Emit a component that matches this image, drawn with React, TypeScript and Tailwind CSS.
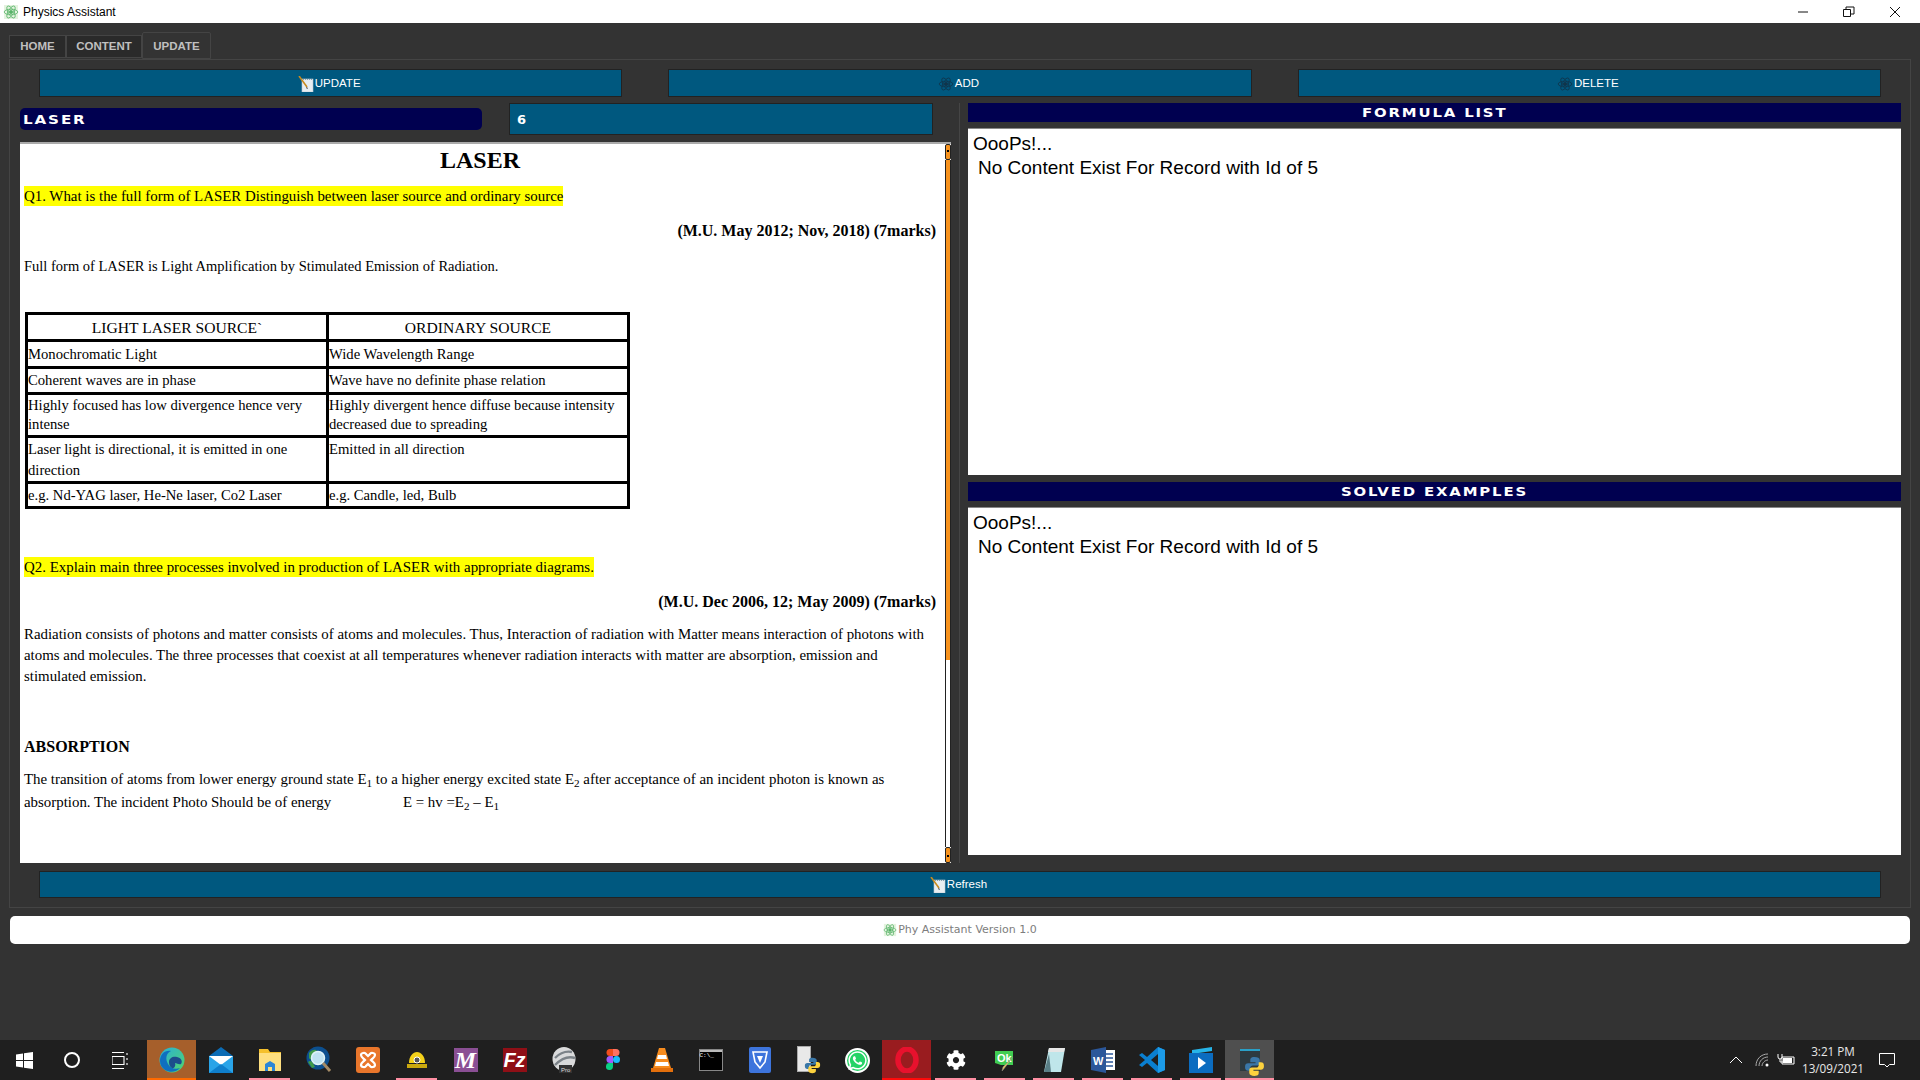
import React from "react";
import { FaCog, FaWhatsapp } from "react-icons/fa";

const serif = "font-['Liberation_Serif',serif]";
const techno = "font-['DejaVu_Sans',sans-serif] font-bold";

const AtomIcon = ({ dark = false, size = 16 }: { dark?: boolean; size?: number }) => {
  const c = dark ? "#10344a" : "#58b368";
  return (
    <svg width={size} height={size} viewBox="0 0 16 16" fill="none" stroke={c} strokeWidth="0.8">
      {!dark && <rect x="1" y="1" width="14" height="14" fill="#e4f3df" stroke="none" />}
      <ellipse cx="8" cy="8" rx="6.8" ry="2.8" />
      <ellipse cx="8" cy="8" rx="6.8" ry="2.8" transform="rotate(60 8 8)" />
      <ellipse cx="8" cy="8" rx="6.8" ry="2.8" transform="rotate(120 8 8)" />
      <circle cx="8" cy="8" r="1.6" fill={c} />
    </svg>
  );
};

const NoteIcon = () => (
  <svg width="16" height="16" viewBox="0 0 16 16">
    <rect x="4" y="3" width="11" height="13" fill="#e8eef2" stroke="#b9c7d0" strokeWidth="0.6" />
    <path d="M5 3.500h9" stroke="#8aa0ad" strokeWidth="1" strokeDasharray="1 1" />
    <path d="M1 0l8 11" stroke="#c88b1f" strokeWidth="1.6" />
    <path d="M9 11l1 2-2-1z" fill="#222" />
  </svg>
);

const Edge = () => (
  <svg width="26" height="26" viewBox="0 0 26 26">
    <defs>
      <linearGradient id="edgeA" x1="0" y1="0" x2="1" y2="1">
        <stop offset="0" stopColor="#29b0d8" />
        <stop offset="1" stopColor="#52d46c" />
      </linearGradient>
    </defs>
    <circle cx="13" cy="13" r="12.5" fill="url(#edgeA)" />
    <path d="M1 14C1 7 6 3 12 4c-5 2-6 8-3 13 2 4 7 6 12 4-3 4-10 5-15 2C3 21 1 18 1 14z" fill="#0f6fc0" />
    <path d="M10 15c0-4 4-6 8-5 4 1 6 4 4 7-2 1-4-1-6-1 1 3-1 6-3 5-2-1-3-3-3-6z" fill="#1c4d8c" />
  </svg>
);

const Mail = () => (
  <svg width="26" height="28" viewBox="0 0 26 28">
    <path d="M1 10L13 1l12 9v17H1z" fill="#0b6cb5" />
    <path d="M1 10h24v17H1z" fill="#29a4e8" />
    <path d="M1 10l12 9 12-9" fill="#ffffff" />
    <path d="M1 27l12-9 12 9z" fill="#0f7fcc" />
  </svg>
);

const Folder = () => (
  <svg width="24" height="24" viewBox="0 0 24 24">
    <path d="M1 1h9l2 3h11v19H1z" fill="#f5c02c" />
    <path d="M1 5h22v18H1z" fill="#ffdf7f" />
    <path d="M7 23v-7l5-3 5 3v7h-3v-4h-4v4z" fill="#2f86d6" />
  </svg>
);

const Search = () => (
  <svg width="26" height="28" viewBox="0 0 26 28">
    <circle cx="12" cy="12" r="11.5" fill="#0c4f8f" />
    <path d="M3 7c3-4 7-4 8-2s-3 3-4 6-3 3-4 1z" fill="#3f9a4a" />
    <circle cx="12" cy="12" r="6.500" fill="#bfe3f2" stroke="#dff3f8" strokeWidth="1.500" />
    <path d="M2 16c3-3 5 1 7 5l-3 1z" fill="#3f9a4a" />
    <path d="M17 17l7 8" stroke="#a58b66" strokeWidth="3" />
  </svg>
);

const Xampp = () => (
  <svg width="24" height="26" viewBox="0 0 24 26">
    <rect width="24" height="26" rx="3" fill="#e9762b" />
    <path d="M5 8c0-2 4-3 5-1l2 2 2-2c1-2 5-1 5 1 0 2-2 3-4 5 2 2 4 3 4 5 0 2-4 3-5 1l-2-2-2 2c-1 2-5 1-5-1 0-2 2-3 4-5-2-2-4-3-4-5z" fill="none" stroke="#fff" strokeWidth="2.2" />
  </svg>
);

const Helmet = () => (
  <svg width="20" height="20" viewBox="0 0 20 20">
    <path d="M2 13C2 6 6 2 10 2s8 4 8 11z" fill="#f4d11a" />
    <path d="M0 14h20v4H0z" fill="#caa80e" />
    <circle cx="10" cy="10" r="3" fill="#555" stroke="#fff" />
  </svg>
);

const SquareText = ({ bg, text, cls }: { bg: string; text: string; cls: string }) => (
  <div className={`flex h-[24px] w-[24px] items-center justify-center ${cls}`} style={{ backgroundColor: bg }}>
    {text}
  </div>
);

const Earth = () => (
  <svg width="24" height="26" viewBox="0 0 24 26">
    <ellipse cx="12" cy="12" rx="11.5" ry="12" fill="#d9dadb" />
    <path d="M3 11c6-6 12-7 17-6M3 18c7-7 14-9 20-7" stroke="#7b8288" strokeWidth="2.4" fill="none" />
    <rect x="7" y="18" width="13" height="8" fill="#333" />
    <text x="9" y="25" fontSize="6" fill="#ddd" fontFamily="Liberation Sans">Pro</text>
  </svg>
);

const Figma = () => (
  <svg width="14" height="22" viewBox="0 0 14 22">
    <path d="M7 0H4a3.5 3.5 0 000 7h3z" fill="#f24e1e" />
    <path d="M7 0h3a3.5 3.5 0 010 7H7z" fill="#ff7262" />
    <path d="M7 7H4a3.5 3.5 0 000 7h3z" fill="#a259ff" />
    <circle cx="10.5" cy="10.5" r="3.5" fill="#1abcfe" />
    <path d="M7 14H4a3.5 3.5 0 103 3.5z" fill="#0acf83" />
  </svg>
);

const Vlc = () => (
  <svg width="22" height="26" viewBox="0 0 22 26">
    <path d="M8 1h6l6 20H2z" fill="#f78c1e" />
    <path d="M7 8h8l1 4H6zM5 15h12l1 4H4z" fill="#fff" />
    <path d="M0 21h22v4H0z" fill="#e36f0c" />
  </svg>
);

const Cmd = () => (
  <div className="flex h-[22px] w-[24px] flex-col border border-[#888] bg-black">
    <div className="h-[2px] bg-[#bbb]" />
    <span className="font-['Liberation_Mono',monospace] text-[6px] leading-[8px] text-white">C:\_</span>
  </div>
);

const Shield = () => (
  <svg width="22" height="26" viewBox="0 0 22 26">
    <rect width="22" height="26" rx="2" fill="#3d74dc" />
    <path d="M4 5h14l-2 10-5 6-5-6z" fill="none" stroke="#fff" strokeWidth="1.6" />
    <path d="M8 9h6l-3 7z" fill="#fff" />
  </svg>
);

const Python = ({ size = 20 }: { size?: number }) => (
  <svg width={size} height={size} viewBox="0 0 20 20">
    <path d="M10 1C6 1 6 3 6 4v2h5v1H4C2 7 1 8 1 10.5S2 14 4 14h2v-2.500c0-1.500 1-2.500 2.500-2.500h4C14 9 15 8 15 6.500V4c0-2-2-3-5-3z" fill="#3a77a8" />
    <path d="M10 19c4 0 4-2 4-3v-2H9v-1h7c2 0 3-1 3-3.500S18 6 16 6h-2v2.500c0 1.500-1 2.500-2.500 2.500h-4C6 11 5 12 5 13.500V16c0 2 2 3 5 3z" fill="#fdd23e" />
  </svg>
);

const PyFile = () => (
  <div className="relative h-[28px] w-[24px]">
    <div className="h-[26px] w-[14px] border border-[#aaa] bg-[#e9e9e9]" />
    <div className="absolute bottom-0 right-0">
      <Python size={17} />
    </div>
  </div>
);

const Opera = () => (
  <svg width="24" height="26" viewBox="0 0 24 26">
    <ellipse cx="12" cy="13" rx="9" ry="11" fill="none" stroke="#e8112d" strokeWidth="5.500" />
  </svg>
);

const QtIcon = () => (
  <svg width="24" height="24" viewBox="0 0 24 24">
    <path d="M2 3h18v14H8l-6-2z" fill="#41cd52" />
    <text x="4" y="14" fontSize="11" fontWeight="700" fill="#fff" fontFamily="Liberation Sans">Ok</text>
    <path d="M20 9L10 22l-1 1 1-4z" fill="#e8c75e" stroke="#888" strokeWidth="0.5" />
  </svg>
);

const Notes = () => (
  <svg width="24" height="26" viewBox="0 0 24 26">
    <path d="M7 1h16l-4 24H2z" fill="#bfe6ea" />
    <path d="M7 1h16l-1 4H6z" fill="#e6e6e6" />
    <path d="M2 25l5-18 2 18z" fill="#5a7f86" />
  </svg>
);

const Word = () => (
  <svg width="24" height="26" viewBox="0 0 24 26">
    <rect x="10" y="3" width="14" height="20" fill="#fff" />
    <path d="M14 7h8M14 11h8M14 15h8M14 19h8" stroke="#2b579a" strokeWidth="1.600" />
    <path d="M0 3l15-3v26L0 23z" fill="#2b579a" />
    <text x="2" y="18" fontSize="11" fontWeight="700" fill="#fff" fontFamily="Liberation Sans">W</text>
  </svg>
);

const VsCode = () => (
  <svg width="26" height="26" viewBox="0 0 26 26">
    <path d="M19 0l7 3v20l-7 3-11-10-5 4-3-2 6-5-6-5 3-2 5 4z" fill="#0a7fd0" />
    <path d="M19 7l-7 6 7 6z" fill="#1f1f1f" />
    <path d="M19 0l7 3v20l-7 3z" fill="#1c9be8" />
  </svg>
);

const Player = () => (
  <svg width="24" height="26" viewBox="0 0 24 26">
    <path d="M3 3l20-3v4L3 7z" fill="#27b4e8" />
    <rect y="6" width="24" height="20" fill="#0b6cc0" />
    <path d="M9 10l8 6-8 6z" fill="#fff" />
  </svg>
);

const PyApp = () => (
  <div className="relative h-[22px] w-[20px] border-t-2 border-[#2aa0c8] bg-[#2d3a40]">
    <div className="absolute -bottom-[6px] -right-[5px]">
      <Python size={21} />
    </div>
  </div>
);

const WhatsApp = () => (
  <div className="flex h-[25px] w-[25px] items-center justify-center rounded-full border-[2px] border-white bg-[#25d366]">
    <FaWhatsapp size={21} color="#fff" />
  </div>
);

const Windows = () => (
  <svg width="17" height="17" viewBox="0 0 17 17" fill="#fff">
    <path d="M0 2.500l7-1v6.500H0zM8 1.300L17 0v8H8zM0 9h7v6.500l-7-1zM8 9h9v8l-9-1.300z" />
  </svg>
);

const TaskView = () => (
  <svg width="17" height="17" viewBox="0 0 17 17" fill="none" stroke="#fff" strokeWidth="1.100">
    <path d="M0 .5h12M0 16.500h12M0 4.500h12v8H0zM15 1v2M15 6v2M15 11v2" />
  </svg>
);

const taskbarItems: { icon: React.ReactNode; mark?: string; bg?: string }[] = [
  { icon: <Edge />, bg: "bg-[#a65f2b]", mark: "bg-[#ff6a00]" },
  { icon: <Mail /> },
  { icon: <Folder />, mark: "bg-[#ff8fa3]" },
  { icon: <Search /> },
  { icon: <Xampp /> },
  { icon: <Helmet />, mark: "bg-[#ff8fa3]" },
  { icon: <SquareText bg="#8a4f94" text="M" cls="font-['Liberation_Serif',serif] text-[24px] font-bold italic text-white" /> },
  { icon: <SquareText bg="#8f0f16" text="Fz" cls="font-['Liberation_Sans',sans-serif] text-[20px] font-bold italic text-white" /> },
  { icon: <Earth /> },
  { icon: <Figma /> },
  { icon: <Vlc /> },
  { icon: <Cmd /> },
  { icon: <Shield /> },
  { icon: <PyFile /> },
  { icon: <WhatsApp /> },
  { icon: <Opera />, bg: "bg-[#991c1f]", mark: "bg-[#ff0a0a]" },
  { icon: <FaCog size={20} color="#fff" />, mark: "bg-[#ff8fa3]" },
  { icon: <QtIcon />, mark: "bg-[#ff8fa3]" },
  { icon: <Notes />, mark: "bg-[#ff8fa3]" },
  { icon: <Word />, mark: "bg-[#ff8fa3]" },
  { icon: <VsCode />, mark: "bg-[#ff8fa3]" },
  { icon: <Player />, mark: "bg-[#ff8fa3]" },
  { icon: <PyApp />, bg: "bg-[#4f4f4f]", mark: "bg-[#ff8fa3]" },
];

const ActionButton = ({ label, icon, className = "" }: { label: string; icon: React.ReactNode; className?: string }) => (
  <div className={`flex items-center justify-center gap-[1px] border border-[#222] bg-[#00587f] pr-[3px] pt-[1px] font-['Liberation_Sans',sans-serif] text-[11.5px] text-white ${className}`}>
    {icon}
    <span>{label}</span>
  </div>
);

const TableRow = ({ cells, h, center }: { cells: string[]; h: string; center?: boolean }) => (
  <tr className={h}>
    {cells.map((c) => (
      <td key={c} className={`w-1/2 border-[3px] border-black px-0 leading-[19px] ${center ? "pt-[1px] text-center text-[15.6px]" : ""}`}>
        {c}
      </td>
    ))}
  </tr>
);

const ErrorBox = ({ className }: { className: string }) => (
  <div className={`bg-white px-[5px] pt-[3px] font-['Liberation_Sans',sans-serif] text-[19px] leading-[24px] text-black ${className}`}>
    <div>OooPs!...</div>
    <div className="pl-[5px]">No Content Exist For Record with Id of 5</div>
  </div>
);

const SectionBar = ({ label }: { label: string }) => (
  <div className={`flex h-[19px] items-center justify-center bg-[#000050] pt-[1px] text-[12px] text-white ${techno}`}>
    <span className="inline-block scale-x-[1.24] tracking-[1.5px]">{label}</span>
  </div>
);

export default function App() {
  return (
    <div className="flex h-screen w-[1920px] flex-col overflow-hidden bg-[#333333]">
      <div className="flex h-[23px] items-center bg-white pl-[3px] font-['Liberation_Sans',sans-serif] text-[12px] text-black">
        <AtomIcon />
        <span className="ml-[4px]">Physics Assistant</span>
        <div className="ml-auto mr-[2px] flex">
          <div className="flex w-[46px] justify-center">
            <svg width="12" height="12" viewBox="0 0 12 12"><path d="M1 6h10" stroke="#111" /></svg>
          </div>
          <div className="flex w-[46px] justify-center">
            <svg width="12" height="12" viewBox="0 0 12 12" fill="none" stroke="#111"><path d="M.5 3.500h7v7h-7zM3 3.500V1h8v7H8" /></svg>
          </div>
          <div className="flex w-[46px] justify-center">
            <svg width="12" height="12" viewBox="0 0 12 12" stroke="#111"><path d="M1 1l10 10M11 1L1 11" /></svg>
          </div>
        </div>
      </div>

      <div className="flex h-[36px] items-end pl-[9px] font-['Liberation_Sans',sans-serif] text-[11.5px] font-bold text-[#c0c0c0]">
        <div className="mb-[1px] flex h-[23px] w-[57px] items-center justify-center border border-[#444] bg-[#2a2a2a]">HOME</div>
        <div className="mb-[1px] flex h-[23px] w-[76px] items-center justify-center border border-[#444] bg-[#2a2a2a]">CONTENT</div>
        <div className="flex h-[27px] w-[69px] items-start justify-center rounded-t-[2px] border border-[#444] bg-[#333333] pt-[5px]">UPDATE</div>
      </div>

      <div className="mx-[9px] flex flex-col border border-[#444] pb-[9px] pl-[10px] pr-[9px] pt-[9px]">
        <div className="flex h-[28px] gap-[46px] pl-[19px] pr-[20px]">
          <ActionButton className="flex-1" label="UPDATE" icon={<NoteIcon />} />
          <ActionButton className="flex-1" label="ADD" icon={<AtomIcon dark />} />
          <ActionButton className="flex-1" label="DELETE" icon={<AtomIcon dark />} />
        </div>

        <div className="mt-[6px] flex">
          <div className="flex w-[931px] flex-col">
            <div className="flex h-[32px] items-center">
              <div className={`flex h-[22px] w-[462px] items-center rounded-[5px] bg-[#000050] pl-[3px] pt-[1px] text-[12px] text-white ${techno}`}>
                <span className="inline-block origin-left scale-x-[1.26] tracking-[1.5px]">LASER</span>
              </div>
              <div className={`ml-[27px] flex h-[32px] w-[424px] items-center border border-[#222] bg-[#00587f] pl-[7px] pt-[1px] text-[13px] text-white ${techno}`}>6</div>
            </div>
            <div className={`mt-[7px] flex h-[721px] border-t-2 border-[#aaaaaa] bg-white text-[14.9px] text-black ${serif}`}>
              <div className="flex-1 pl-[4px] pr-[9px]">
                <h1 className="mt-[2px] text-center text-[24px] font-bold leading-[28px]">LASER</h1>
                <p className="mt-[12px] h-[20px] leading-[20px]"><span className="inline-block bg-[#ffff00]">Q1. What is the full form of LASER Distinguish between laser source and ordinary source</span></p>
                <p className="mt-[15px] h-[20px] text-right text-[16px] font-bold leading-[20px]">(M.U. May 2012; Nov, 2018) (7marks)</p>
                <p className="mt-[15px] h-[20px] text-[14.5px] leading-[20px]">Full form of LASER is Light Amplification by Stimulated Emission of Radiation.</p>
                <table className="ml-[1px] mt-[36px] w-[605px] table-fixed border-collapse text-[14.67px]">
                  <tbody>
                    <TableRow h="h-[27px]" center cells={["LIGHT LASER SOURCE`", "ORDINARY SOURCE"]} />
                    <TableRow h="h-[27px]" cells={["Monochromatic Light", "Wide Wavelength Range"]} />
                    <TableRow h="h-[26px]" cells={["Coherent waves are in phase", "Wave have no definite phase relation"]} />
                    <TableRow h="h-[43px]" cells={["Highly focused has low divergence hence very intense", "Highly divergent hence diffuse because intensity decreased due to spreading"]} />
                    <tr className="h-[46px]">
                      <td className="w-1/2 border-[3px] border-black px-0 leading-[21px]">Laser light is directional, it is emitted in one direction</td>
                      <td className="w-1/2 border-[3px] border-black px-0 pb-[20px] leading-[19px]">Emitted in all direction</td>
                    </tr>
                    <TableRow h="h-[25px]" cells={["e.g. Nd-YAG laser, He-Ne laser, Co2 Laser", "e.g. Candle, led, Bulb"]} />
                  </tbody>
                </table>
                <p className="mt-[48px] h-[20px] leading-[20px]"><span className="inline-block bg-[#ffff00]">Q2. Explain main three processes involved in production of LASER with appropriate diagrams.</span></p>
                <p className="mt-[15px] h-[20px] text-right text-[16px] font-bold leading-[20px]">(M.U. Dec 2006, 12; May 2009) (7marks)</p>
                <p className="mt-[12px] leading-[21px]">Radiation consists of photons and matter consists of atoms and molecules. Thus, Interaction of radiation with Matter means interaction of photons with atoms and molecules. The three processes that coexist at all temperatures whenever radiation interacts with matter are absorption, emission and stimulated emission.</p>
                <p className="mt-[50px] h-[20px] text-[16px] font-bold leading-[20px]">ABSORPTION</p>
                <p className="mt-[11px] leading-[23px]">The transition of atoms from lower energy ground state E<sub>1</sub> to a higher energy excited state E<sub>2</sub> after acceptance of an incident photon is known as absorption. The incident Photo Should be of energy <span className="ml-[68px]">E = hv =E<sub>2</sub> – E<sub>1</sub></span></p>
              </div>
              <div className="flex w-[6px] flex-col">
                <div className="relative h-[16px] rounded-[2px] border border-[#222] bg-[#f7931e]">
                  <div className="absolute left-[1px] top-[5px] h-[2px] w-[2px] bg-black" />
                </div>
                <div className="h-[500px] border-x border-[#222] bg-[#f7931e]" />
                <div className="flex-1 border-x border-[#222] bg-white" />
                <div className="relative h-[16px] rounded-[2px] border border-[#222] bg-[#f7931e]">
                  <div className="absolute left-[1px] top-[7px] h-[2px] w-[2px] bg-black" />
                </div>
              </div>
            </div>
          </div>

          <div className="mx-[8px] w-[1px] bg-[#454545]" />

          <div className="flex flex-1 flex-col">
            <SectionBar label="FORMULA LIST" />
            <ErrorBox className="mt-[6px] h-[347px] border-t border-[#888]" />
            <div className="mt-[7px]">
              <SectionBar label="SOLVED EXAMPLES" />
            </div>
            <ErrorBox className="mt-[6px] h-[348px] border-t border-[#888]" />
          </div>
        </div>

        <div className="mt-[8px] flex h-[27px] pl-[19px] pr-[20px]">
          <ActionButton className="flex-1" label="Refresh" icon={<NoteIcon />} />
        </div>
      </div>

      <div className="mx-[10px] mt-[8px] flex h-[28px] items-center justify-center gap-[1px] rounded-[5px] bg-white font-['DejaVu_Sans',sans-serif] text-[11px] text-[#7d7d7d]">
        <AtomIcon size={14} />
        <span>Phy Assistant Version 1.0</span>
      </div>

      <div className="mt-auto flex h-[40px] items-stretch bg-[#1f1f1f] text-white">
        <div className="flex w-[48px] items-center justify-center"><Windows /></div>
        <div className="flex w-[48px] items-center justify-center"><div className="h-[16px] w-[16px] rounded-full border-2 border-white" /></div>
        <div className="mr-[3px] flex w-[48px] items-center justify-center"><TaskView /></div>
        {taskbarItems.map((item, i) => (
          <div key={i} className={`relative flex w-[49px] items-center justify-center ${item.bg ?? ""}`}>
            {item.icon}
            {item.mark && <div className={`absolute bottom-0 h-[2px] ${item.mark} ${item.bg ? "left-0 right-0" : "left-[4px] right-[4px]"}`} />}
          </div>
        ))}
        <div className="ml-auto flex items-center text-[#e8e8e8]">
          <svg width="14" height="8" viewBox="0 0 14 8" fill="none" stroke="#fff"><path d="M1 7l6-6 6 6" /></svg>
          <svg className="ml-[12px]" width="14" height="14" viewBox="0 0 14 14" fill="none" stroke="#aaa"><path d="M1 13C1 6 6 1 13 1M4 13c0-5 4-9 9-9M7 13c0-3 3-6 6-6" /><circle cx="12" cy="12" r="1.500" fill="#fff" stroke="none" /></svg>
          <svg className="ml-[8px]" width="18" height="14" viewBox="0 0 18 14" fill="none" stroke="#fff"><path d="M5 4h12v7H5z" /><path d="M6 5h9v5H6z" fill="#fff" stroke="none" /><path d="M1 1v3a2 2 0 004 0V1M3 6v3h3" /></svg>
          <div className="ml-[2px] w-[72px] text-center font-['Open_Sans',sans-serif] text-[11.7px] leading-[17px]">
            <div>3:21 PM</div>
            <div>13/09/2021</div>
          </div>
          <svg className="ml-[10px] mr-[25px]" width="16" height="15" viewBox="0 0 16 15" fill="none" stroke="#fff"><path d="M.5.5h15v11h-5l-2.500 2.500L5.500 11.500h-5z" /></svg>
        </div>
      </div>
    </div>
  );
}
